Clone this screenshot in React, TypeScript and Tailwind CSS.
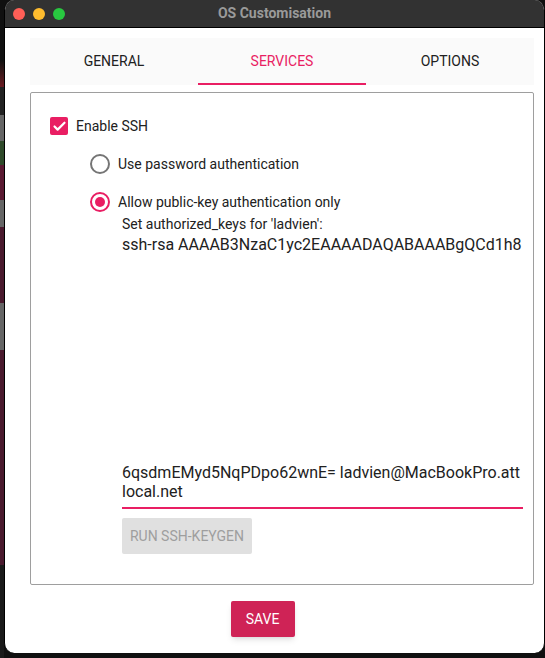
import { Check } from "lucide-react";

const roboto = { fontFamily: "Roboto, sans-serif" };

function Tab({ label, active }: { label: string; active?: boolean }) {
  return (
    <div
      className={
        active
          ? "flex-1 flex items-center justify-center pt-[2px] text-[14px] text-[#e91e63] border-b-2 border-[#e91e63]"
          : "flex-1 flex items-center justify-center pt-[2px] text-[14px] text-[#212121] border-b-2 border-transparent"
      }
    >
      {label}
    </div>
  );
}

export default function App() {
  return (
    <div className="w-[545px] h-[658px] bg-[#101010] overflow-hidden flex" style={roboto}>
      {/* wallpaper peeking out on the left of the window */}
      <div className="w-[4px] shrink-0 flex flex-col">
        <div className="h-[60px] bg-[#101010]" />
        <div className="h-[27px] bg-linear-to-b from-[#101010] to-[#6b1a22]" />
        <div className="h-[28px] bg-[#222222]" />
        <div className="h-[26px] bg-[#666666]" />
        <div className="h-[24px] bg-[#2f4a2a]" />
        <div className="h-[35px] bg-[#5a1a32]" />
        <div className="h-[27px] bg-[#666666]" />
        <div className="h-[76px] bg-[#4a1a2e]" />
        <div className="h-[47px] bg-[#666666]" />
        <div className="h-[215px] bg-[#4a1a2e]" />
        <div className="flex-1 bg-[#1a1a1a]" />
      </div>

      <div className="w-[541px] h-[653px] shrink-0 bg-white rounded-[10px] border-x border-black overflow-hidden flex flex-col">
        <div className="h-[28px] shrink-0 bg-[#323232] border-b border-black flex items-center pl-[8px] relative">
          <div className="flex gap-[8px]">
            <div className="w-[12px] h-[12px] rounded-full bg-[#ff5f57]" />
            <div className="w-[12px] h-[12px] rounded-full bg-[#febc2e]" />
            <div className="w-[12px] h-[12px] rounded-full bg-[#28c840]" />
          </div>
          <div className="absolute left-0 right-0 text-center text-[14px] font-bold text-[#9a9a9a]">
            OS Customisation
          </div>
        </div>

        <div className="pl-[25px] pr-[10px] pt-[10px]">
          <div className="flex h-[47px] bg-[#fafafa]">
            <Tab label="GENERAL" />
            <Tab label="SERVICES" active />
            <Tab label="OPTIONS" />
          </div>

          <div className="mt-[7px] h-[493px] border border-[#9e9e9e] rounded-[2px] pl-[19px] pr-[10px] pt-[24px]">
            <div className="flex items-center gap-[8px] h-[18px] text-[14px] text-[#212121]">
              <div className="w-[18px] h-[18px] rounded-[2px] bg-[#e91e63] flex items-center justify-center">
                <Check size={15} strokeWidth={3.5} className="text-white" />
              </div>
              Enable SSH
            </div>

            <div className="pl-[40px] mt-[19px]">
              <div className="flex items-center gap-[8px] h-[20px] text-[14px] text-[#212121]">
                <div className="w-[20px] h-[20px] rounded-full border-2 border-[#757575]" />
                Use password authentication
              </div>
              <div className="flex items-center gap-[8px] h-[20px] mt-[18px] text-[14px] text-[#212121]">
                <div className="w-[20px] h-[20px] rounded-full border-2 border-[#e91e63] flex items-center justify-center">
                  <div className="w-[10px] h-[10px] rounded-full bg-[#e91e63]" />
                </div>
                Allow public-key authentication only
              </div>

              <div className="pl-[32px]">
                <div className="text-[14px] leading-[16px] mt-[4px] text-[#212121]">
                  Set authorized_keys for 'ladvien':
                </div>
                <div className="h-[274px] mt-[3px] border-b-2 border-[#e91e63] flex flex-col justify-between text-[16px] leading-[19px] text-[#212121] pb-[6px] whitespace-nowrap">
                  <div>ssh-rsa AAAAB3NzaC1yc2EAAAADAQABAAABgQCd1h8</div>
                  <div>
                    <div>6qsdmEMyd5NqPDpo62wnE= ladvien@MacBookPro.att</div>
                    <div>local.net</div>
                  </div>
                </div>
                <div className="mt-[9px] w-[130px] h-[36px] rounded-[2px] bg-[#e0e0e0] flex items-center justify-center text-[14px] text-[#9e9e9e]">
                  RUN SSH-KEYGEN
                </div>
              </div>
            </div>
          </div>

          <div className="flex justify-center mt-[16px] pr-[39px]">
            <div className="w-[64px] h-[36px] rounded-[2px] bg-[#cf2356] text-white text-[14px] flex items-center justify-center shadow-md">
              SAVE
            </div>
          </div>
        </div>
      </div>
    </div>
  );
}
